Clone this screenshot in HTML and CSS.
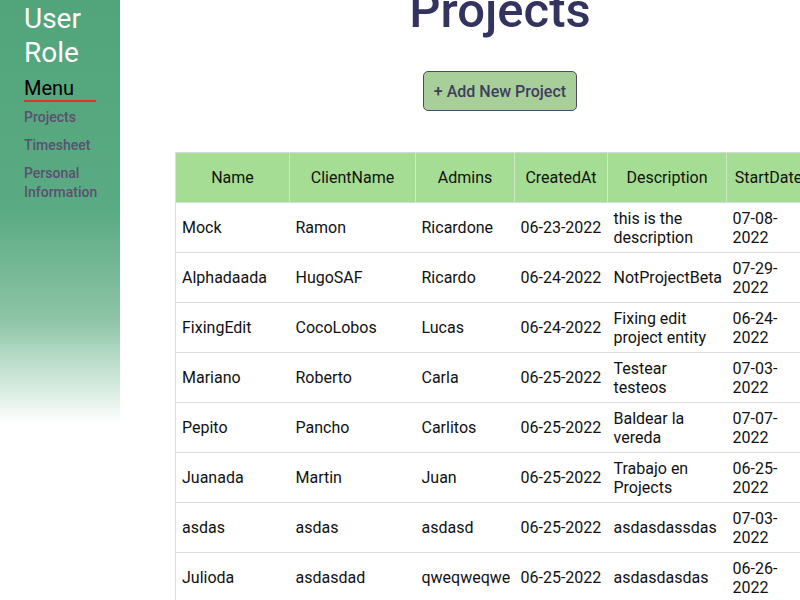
FILE: index.html
```html
<!DOCTYPE html>
<html>
<head>
<meta charset="utf-8">
<link rel="stylesheet" href="styles.css">
</head>
<body>
<div class="page">
  <aside class="sidebar">
    <div class="role">User<br>Role</div>
    <div class="menu-title">Menu</div>
    <nav class="menu">
      <a href="#">Projects</a>
      <a href="#">Timesheet</a>
      <a href="#">Personal Information</a>
    </nav>
  </aside>
  <main class="main">
    <h1 class="title">Projects</h1>
    <button class="add-btn">+ Add New Project</button>
    <table class="projects">
      <colgroup>
        <col class="c1"><col class="c2"><col class="c3"><col class="c4"><col class="c5"><col class="c6">
      </colgroup>
      <thead>
        <tr><th>Name</th><th>ClientName</th><th>Admins</th><th>CreatedAt</th><th>Description</th><th>StartDate</th></tr>
      </thead>
      <tbody>
        <tr><td>Mock</td><td>Ramon</td><td>Ricardone</td><td>06-23-2022</td><td>this is the description</td><td>07-08-2022</td></tr>
        <tr><td>Alphadaada</td><td>HugoSAF</td><td>Ricardo</td><td>06-24-2022</td><td>NotProjectBeta</td><td>07-29-2022</td></tr>
        <tr><td>FixingEdit</td><td>CocoLobos</td><td>Lucas</td><td>06-24-2022</td><td>Fixing edit project entity</td><td>06-24-2022</td></tr>
        <tr><td>Mariano</td><td>Roberto</td><td>Carla</td><td>06-25-2022</td><td>Testear testeos</td><td>07-03-2022</td></tr>
        <tr><td>Pepito</td><td>Pancho</td><td>Carlitos</td><td>06-25-2022</td><td>Baldear la vereda</td><td>07-07-2022</td></tr>
        <tr><td>Juanada</td><td>Martin</td><td>Juan</td><td>06-25-2022</td><td>Trabajo en Projects</td><td>06-25-2022</td></tr>
        <tr><td>asdas</td><td>asdas</td><td>asdasd</td><td>06-25-2022</td><td>asdasdassdas</td><td>07-03-2022</td></tr>
        <tr><td>Julioda</td><td>asdasdad</td><td>qweqweqwe</td><td>06-25-2022</td><td>asdasdasdas</td><td>06-26-2022</td></tr>
      </tbody>
    </table>
  </main>
</div>
</body>
</html>
```

FILE: styles.css
```css
html, body {
  margin: 0;
  padding: 0;
  background: #fff;
  overflow: hidden;
  font-family: Roboto, "Liberation Sans", sans-serif;
}
.page {
  display: flex;
  align-items: flex-start;
  width: 880px;
  height: 600px;
}
.sidebar {
  flex: 0 0 120px;
  width: 120px;
  height: 424px;
  box-sizing: border-box;
  padding: 2px 0 0 24px;
  background: linear-gradient(to bottom, #52a47a 0%, #5aab83 50%, #8cc4a6 75%, #d9ede2 92%, #ffffff 100%);
}
.role {
  color: #fff;
  font-size: 28px;
  line-height: 34px;
}
.menu-title {
  display: inline-block;
  width: 72px;
  margin-top: 7px;
  font-size: 20px;
  line-height: 22px;
  color: #000;
  border-bottom: 2px solid #e8302a;
  padding-bottom: 1px;
}
.menu {
  display: flex;
  flex-direction: column;
  gap: 9px;
  margin-top: 6px;
}
.menu a {
  color: #5a5070;
  font-size: 14px;
  font-weight: 500;
  line-height: 19px;
  text-decoration: none;
}
.main {
  flex: 0 0 760px;
  display: flex;
  flex-direction: column;
  align-items: center;
}
.title {
  margin: -17px 0 0 0;
  font-size: 49px;
  line-height: 56px;
  font-weight: 500;
  color: #33335f;
}
.add-btn {
  margin-top: 32px;
  width: 154px;
  height: 40px;
  box-sizing: border-box;
  background: #a8cf9a;
  border: 1px solid #4a4a66;
  border-radius: 5px;
  color: #3e3e5e;
  font-family: Roboto, "Liberation Sans", sans-serif;
  font-size: 16px;
  font-weight: 500;
  padding: 0;
}
.projects {
  margin-top: 41px;
  margin-left: 55px;
  align-self: flex-start;
  border-collapse: collapse;
  table-layout: fixed;
  width: 635px;
  font-size: 16px;
  color: #111;
  border-left: 1px solid #dcdcdc;
}
.c1 { width: 114px; }
.c2 { width: 126px; }
.c3 { width: 99px; }
.c4 { width: 93px; }
.c5 { width: 119px; }
.c6 { width: 84px; }
.projects th {
  background: #a6dd95;
  font-weight: 400;
  height: 49px;
  padding: 0 6px;
  text-align: center;
  border-top: 1px solid #d8d8d8;
  border-right: 1px solid #cfe9c5;
  border-bottom: 1px solid #d8d8d8;
}
.projects td {
  height: 49px;
  padding: 0 6px;
  line-height: 19px;
  text-align: left;
  vertical-align: middle;
  border-bottom: 1px solid #dcdcdc;
}
```
